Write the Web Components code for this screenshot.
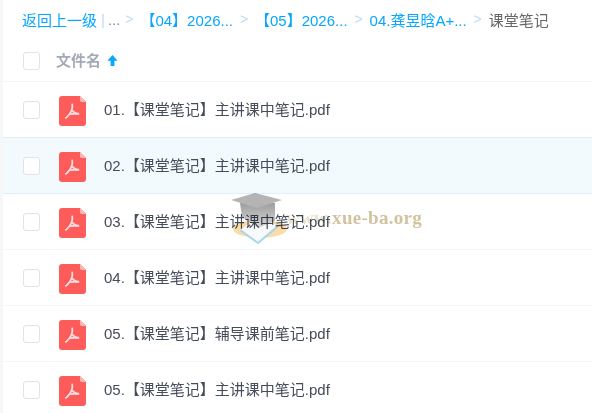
<!DOCTYPE html>
<html>
<head>
<meta charset="utf-8">
<style>
  html, body { margin: 0; height: 100%; overflow: hidden; background: #f7f7f8; }
</style>
</head>
<body>
<file-panel>
  <crumb-bar slot="crumbs"></crumb-bar>
  <list-head slot="head"></list-head>
  <file-row name="01.【课堂笔记】主讲课中笔记.pdf"></file-row>
  <file-row name="02.【课堂笔记】主讲课中笔记.pdf" active></file-row>
  <file-row name="03.【课堂笔记】主讲课中笔记.pdf"></file-row>
  <file-row name="04.【课堂笔记】主讲课中笔记.pdf"></file-row>
  <file-row name="05.【课堂笔记】辅导课前笔记.pdf"></file-row>
  <file-row name="05.【课堂笔记】主讲课中笔记.pdf"></file-row>
  <water-mark></water-mark>
</file-panel>

<script>
const FONT = '"Liberation Sans", "Noto Sans CJK SC", sans-serif';

class FilePanel extends HTMLElement {
  constructor() {
    super();
    this.attachShadow({ mode: "open" });
    this.shadowRoot.innerHTML = `
      <style>
        :host { display: block; position: relative; height: 413px; margin-left: 3px; background: #fff; overflow: hidden; font-family: ${FONT}; }
      </style>
      <slot name="crumbs"></slot>
      <slot name="head"></slot>
      <slot></slot>
    `;
  }
}

class CrumbBar extends HTMLElement {
  constructor() {
    super();
    this.attachShadow({ mode: "open" });
    this.shadowRoot.innerHTML = `
      <style>
        :host { display: flex; align-items: center; height: 38px; padding: 0 0 0 19px; font-size: 15px; color: #06a7ff; white-space: nowrap; }
        .bar { color: #c4d8f4; margin: 0 3px 0 4px; }
        .dots { color: #818999; }
        .sep { color: #c4d8f4; font-size: 14px; width: 22px; text-align: center; }
        .sep.first { margin-left: -2px; }
        .now { color: #666; }
      </style>
      <span>返回上一级</span><span class="bar">|</span><span class="dots">...</span>
      <span class="sep first">&gt;</span><span>【04】2026...</span>
      <span class="sep">&gt;</span><span>【05】2026...</span>
      <span class="sep">&gt;</span><span>04.龚昱晗A+...</span>
      <span class="sep">&gt;</span><span class="now">课堂笔记</span>
    `;
  }
}

class CheckBox extends HTMLElement {
  constructor() {
    super();
    this.attachShadow({ mode: "open" });
    this.shadowRoot.innerHTML = `
      <style>
        :host { display: block; box-sizing: border-box; width: 17px; height: 18px; border: 1px solid #dfe3ea; border-radius: 3px; background: #fff; flex: none; }
      </style>
    `;
  }
}

class ListHead extends HTMLElement {
  constructor() {
    super();
    this.attachShadow({ mode: "open" });
    this.shadowRoot.innerHTML = `
      <style>
        :host { display: flex; align-items: center; box-sizing: border-box; height: 44px; padding: 3px 0 0 20px; border-bottom: 1px solid #f2f4f9; font-size: 15px; font-weight: bold; color: #a3a9b6; }
        span { margin-left: 16px; margin-bottom: 3px; }
        svg { margin: 0 0 2px 5px; }
      </style>
      <check-box></check-box>
      <span>文件名</span>
      <svg width="13" height="13" viewBox="0 0 13 13"><path d="M6.5 1 1.4 6.8H4.6V12H8.4V6.8H11.6Z" fill="#06a7ff"/></svg>
    `;
  }
}

class FileRow extends HTMLElement {
  constructor() {
    super();
    this.attachShadow({ mode: "open" });
    this.shadowRoot.innerHTML = `
      <style>
        :host { display: flex; align-items: center; box-sizing: border-box; height: 56px; padding: 3px 0 0 20px; border-bottom: 1px solid #f5f6fa; font-size: 15px; color: #454d5a; white-space: nowrap; }
        :host([active]) { background: #f3fafe; border-bottom-color: #e1eef8; box-shadow: 0 -1px 0 #e1eef8; }
        check-box { margin-bottom: 2px; }
        svg { margin: 0 18px 0 19px; flex: none; }
        .name { margin-bottom: 5px; }
      </style>
      <check-box></check-box>
      <svg width="27" height="30" viewBox="0 0 27 30">
        <path d="M3 0H21L27 6V27a3 3 0 0 1-3 3H3a3 3 0 0 1-3-3V3a3 3 0 0 1 3-3Z" fill="#fe5b5b"/>
        <path d="M21 0 27 6H22.5a1.5 1.5 0 0 1-1.5-1.5Z" fill="#ffb3b3"/>
        <path d="M13.2 8.5c.6 3.4 0 6-2.6 9.5-1.3 1.7-2.6 3.1-3.8 3.9M13.4 14.6c1.2 1.9 3.2 3 6.8 3.4-2.9-.3-6.6-.5-9.6.2" fill="none" stroke="#ffdcdc" stroke-width="1.8" stroke-linecap="round"/>
      </svg>
      <span class="name"></span>
    `;
  }

  connectedCallback() {
    this.shadowRoot.querySelector(".name").textContent = this.getAttribute("name");
  }
}

class WaterMark extends HTMLElement {
  constructor() {
    super();
    this.attachShadow({ mode: "open" });
    this.shadowRoot.innerHTML = `
      <style>
        :host { position: absolute; left: 225px; top: 190px; width: 200px; height: 60px; pointer-events: none; mix-blend-mode: multiply; }
        svg { position: absolute; left: 0; top: 0; }
        span { position: absolute; left: 58px; top: 17px; font: bold 19px "Liberation Serif", serif; letter-spacing: .3px; color: rgba(190, 165, 115, .68); }
        b { color: rgba(190, 165, 115, .35); }
      </style>
      <svg width="62" height="60" viewBox="0 0 62 60">
        <defs>
          <linearGradient id="skull" x1="0" y1="0" x2="0" y2="1">
            <stop offset="0" stop-color="#9d9d9d"/>
            <stop offset="1" stop-color="#d9d9d9"/>
          </linearGradient>
        </defs>
        <ellipse cx="32" cy="39" rx="27" ry="9" fill="#fbdca6"/>
        <path d="M12 40 30 53 50 36 32 26Z" fill="#f7f9fa"/>
        <path d="M12 40 30 53 50 36" fill="none" stroke="#a9d4ea" stroke-width="2"/>
        <path d="M12 13 14 27 30 38 47 31 47 13Z" fill="url(#skull)"/>
        <path d="M3 10 27 3 54 10 29 18Z" fill="#b4b4b4"/>
      </svg>
      <span><b>www.</b>xue-ba.org</span>
    `;
  }
}

customElements.define("file-panel", FilePanel);
customElements.define("crumb-bar", CrumbBar);
customElements.define("check-box", CheckBox);
customElements.define("list-head", ListHead);
customElements.define("file-row", FileRow);
customElements.define("water-mark", WaterMark);
</script>
</body>
</html>
